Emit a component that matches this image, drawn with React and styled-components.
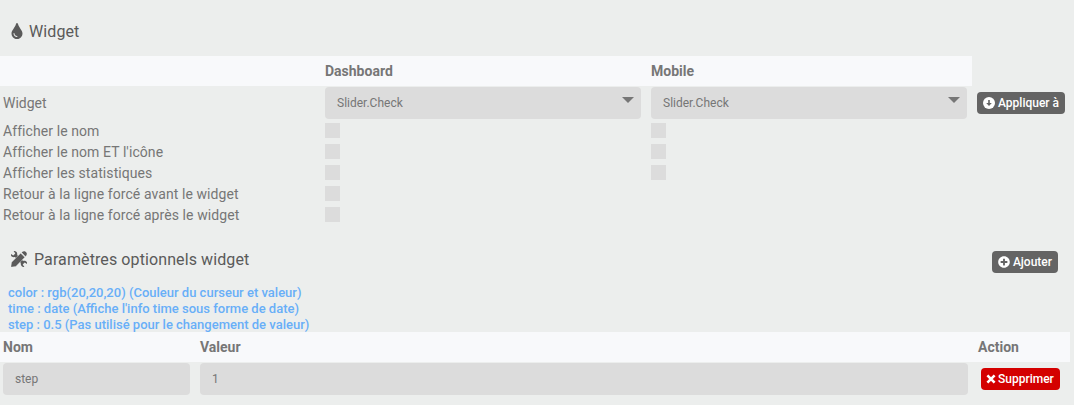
import styled, { createGlobalStyle } from "styled-components";
import { FaTint, FaPlusCircle } from "react-icons/fa";

const displayOptions = [
  { label: "Afficher le nom", mobile: true },
  { label: "Afficher le nom ET l'icône", mobile: true },
  { label: "Afficher les statistiques", mobile: true },
  { label: "Retour à la ligne forcé avant le widget", mobile: false },
  { label: "Retour à la ligne forcé après le widget", mobile: false },
];

const ToolsIcon = () => (
  <svg width="16" height="16" viewBox="0 0 16 16" fill="currentColor">
    <path
      d="M4 4 L12 12"
      stroke="currentColor"
      strokeWidth="3"
      fill="none"
    />
    <path d="M0 3 L2.3 4.5 L4.3 2.6 L2.6 0 C5.2-.4 6.6 1.6 6.2 3.9 L4.2 6 C1.6 6.6-.6 5.4 0 3Z" />
    <path d="M16 13 L13.7 11.5 L11.7 13.4 L13.4 16 C10.8 16.4 9.4 14.4 9.8 12.1 L11.8 10 C14.4 9.4 16.6 10.6 16 13Z" />
    <path
      d="M-.2 16.2 L.6 11.2 L9.7 2.2 L13.8 6.3 L4.8 15.4Z M10.6 1.6 L11.8.4 Q13.2-.5 14.5.5 L15.5 1.5 Q16.5 2.8 15.6 4.2 L14.4 5.4Z"
      stroke="#eceeed"
      strokeWidth=".4"
    />
  </svg>
);

const ArrowIcon = () => (
  <svg width="12" height="12" viewBox="0 0 12 12">
    <circle cx="6" cy="6" r="6" fill="#fff" />
    <path d="M5.2 3h1.6v3h2L6 9.1 3.2 6h2z" fill="#646464" />
  </svg>
);

const CrossIcon = () => (
  <svg width="10" height="10" viewBox="0 0 10 10">
    <path
      d="M1.4 1.4 L8.6 8.6 M8.6 1.4 L1.4 8.6"
      stroke="#fff"
      strokeWidth="2.6"
    />
  </svg>
);

const App = () => {
  return (
    <Page>
      <GlobalStyle />
      <Legend>
        <FaTint size={16} />
        <span>Widget</span>
      </Legend>
      <DisplayGrid>
        <HeadRow>
          <Cell />
          <Cell>Dashboard</Cell>
          <Cell>Mobile</Cell>
        </HeadRow>
        <SelectRow>
          <Cell>Widget</Cell>
          <Cell>
            <Select>Slider.Check</Select>
          </Cell>
          <Cell>
            <Select>Slider.Check</Select>
          </Cell>
          <Button>
            <ArrowIcon />
            Appliquer à
          </Button>
        </SelectRow>
        {displayOptions.map((option) => (
          <OptionRow key={option.label}>
            <Cell>{option.label}</Cell>
            <Cell>
              <Checkbox />
            </Cell>
            <Cell>{option.mobile && <Checkbox />}</Cell>
          </OptionRow>
        ))}
      </DisplayGrid>
      <ParamsHeader>
        <ParamsLegend>
          <ToolsIcon />
          <span>Paramètres optionnels widget</span>
        </ParamsLegend>
        <Button>
          <FaPlusCircle size={12} />
          Ajouter
        </Button>
      </ParamsHeader>
      <Help>
        <li>color : rgb(20,20,20) (Couleur du curseur et valeur)</li>
        <li>time : date (Affiche l'info time sous forme de date)</li>
        <li>step : 0.5 (Pas utilisé pour le changement de valeur)</li>
      </Help>
      <ParamsHeadRow>
        <span>Nom</span>
        <span>Valeur</span>
        <span>Action</span>
      </ParamsHeadRow>
      <ParamsRow>
        <Field>step</Field>
        <Field>1</Field>
        <RemoveButton $danger>
          <CrossIcon />
          Supprimer
        </RemoveButton>
      </ParamsRow>
    </Page>
  );
};

const GlobalStyle = createGlobalStyle`
  body {
    margin: 0;
    background: #eceeed;
  }
  * {
    box-sizing: border-box;
  }
`;

const Page = styled.div`
  height: 405px;
  overflow: hidden;
  color: #767676;
  font-family: Roboto, sans-serif;
  font-size: 14px;
  line-height: 20px;
`;

const Legend = styled.div`
  display: flex;
  align-items: center;
  gap: 4px;
  height: 56px;
  padding: 6px 0 0 9px;
  color: #5a5a5a;
  font-size: 16px;
  letter-spacing: 0.1px;
  span {
    padding-top: 2px;
  }
`;

const DisplayGrid = styled.div`
  width: 1074px;
`;

const Row = styled.div`
  display: grid;
  grid-template-columns: 322px 326px 324px auto;
  align-items: center;
  justify-content: start;
`;

const HeadRow = styled(Row)`
  width: 972px;
  height: 30px;
  background: #f8f9fb;
  font-weight: 700;
`;

const SelectRow = styled(Row)`
  height: 34px;
`;

const OptionRow = styled(Row)`
  height: 21px;
  letter-spacing: 0.08px;
`;

const Cell = styled.div`
  padding-left: 3px;
`;

const Field = styled.div`
  display: flex;
  align-items: center;
  height: 32px;
  padding: 0 12px;
  border-radius: 4px;
  background: #dcdcdc;
  font-size: 12px;
`;

const Select = styled(Field)`
  justify-content: space-between;
  width: 316px;
  padding-right: 7px;
  &::after {
    content: "";
    margin-bottom: 6px;
    border: 6px solid transparent;
    border-top-color: #767676;
    border-bottom: 0;
  }
`;

const Checkbox = styled.div`
  width: 15px;
  height: 15px;
  background: #dcdcdc;
`;

const Button = styled.button`
  display: inline-flex;
  align-items: center;
  gap: 3px;
  height: 22px;
  margin: 0 0 0 5px;
  padding: 0 6px;
  border: 0;
  border-radius: 4px;
  background: ${(props) => (props.$danger ? "#d40000" : "#646464")};
  color: #fff;
  font-family: inherit;
  font-size: 12px;
  font-weight: 500;
  white-space: nowrap;
`;

const RemoveButton = styled(Button)`
  justify-self: start;
  margin-left: 3px;
  gap: 2px;
  padding: 0 5px;
  width: 79px;
`;

const ParamsHeader = styled.div`
  display: flex;
  align-items: flex-start;
  justify-content: space-between;
  height: 60px;
  padding: 26px 16px 0 0;
`;

const ParamsLegend = styled(Legend)`
  height: 16px;
  gap: 7px;
  padding: 0 0 0 11px;
`;

const Help = styled.ul`
  height: 47px;
  margin: 0;
  padding: 0 0 0 8px;
  color: #68aff8;
  font-size: 13px;
  font-weight: 500;
  line-height: 16px;
  list-style: none;
`;

const ParamsHeadRow = styled.div`
  display: grid;
  grid-template-columns: 197px 778px 92px;
  align-items: center;
  width: 1070px;
  height: 30px;
  padding-left: 3px;
  background: #f8f9fb;
  font-weight: 700;
`;

const ParamsRow = styled.div`
  display: grid;
  grid-template-columns: 187px 768px 92px;
  column-gap: 10px;
  align-items: center;
  height: 34px;
  padding-left: 3px;
`;

export default App;
